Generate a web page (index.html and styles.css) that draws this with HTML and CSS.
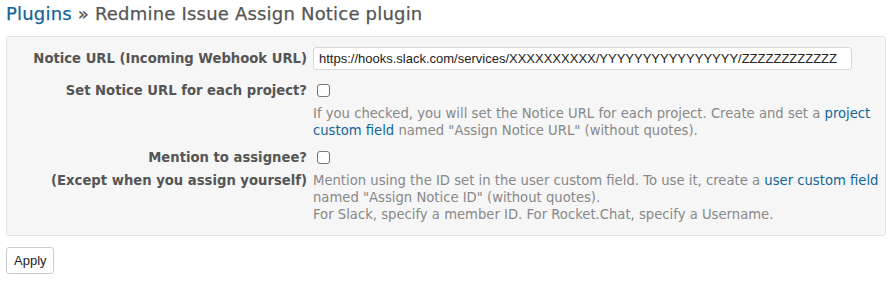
FILE: index.html
```html
<!DOCTYPE html>
<html lang="en">
<head>
  <meta charset="UTF-8" />
  <meta name="viewport" content="width=device-width, initial-scale=1.0" />
  <title>Plugins » Redmine Issue Assign Notice plugin</title>
  <link rel="stylesheet" href="styles.css">
</head>
<body>
  <h2 class="title"><a href="#">Plugins</a> » Redmine Issue Assign Notice plugin</h2>

  <form class="settings">
    <div class="box tabular">
      <div class="row first">
        <label for="notice_url">Notice URL (Incoming Webhook URL)</label>
        <div class="value">
          <input type="text" id="notice_url" class="url" value="https://hooks.slack.com/services/XXXXXXXXXX/YYYYYYYYYYYYYYYY/ZZZZZZZZZZZZ" />
        </div>
      </div>
      <div class="row check-row">
        <label for="each_project">Set Notice URL for each project?</label>
        <div class="value"><input type="checkbox" id="each_project" /></div>
      </div>
      <div class="row info-row">
        <span class="sublabel"></span>
        <em class="info">If you checked, you will set the Notice URL for each project. Create and set a <a href="#">project custom field</a> named "Assign Notice URL" (without quotes).</em>
      </div>
      <div class="row check-row">
        <label for="mention">Mention to assignee?</label>
        <div class="value"><input type="checkbox" id="mention" /></div>
      </div>
      <div class="row info-row">
        <span class="sublabel">(Except when you assign yourself)</span>
        <em class="info">Mention using the ID set in the user custom field. To use it, create a <a href="#">user custom field</a> named "Assign Notice ID" (without quotes).<br/>For Slack, specify a member ID. For Rocket.Chat, specify a Username.</em>
      </div>
    </div>
    <button type="button" class="apply">Apply</button>
  </form>
</body>
</html>
```

FILE: styles.css
```css
body { margin: 0; padding: 3px 6px; font-family: "DejaVu Sans", Verdana, sans-serif; font-size: 13.2px; color: #333; background: #fff; }
a { color: #169; text-decoration: none; }
.title { font-size: 18px; font-weight: normal; letter-spacing: 0.2px; color: #555; margin: 0 0 11px 0; padding: 0; line-height: 22px; -webkit-text-stroke: 0.25px currentColor; }
.box { background: #f6f6f6; border: 1px solid #e4e4e4; border-radius: 3px; padding: 10px 0 12px 0; }
.row { display: grid; grid-template-columns: 300px 1fr; column-gap: 6px; line-height: 17px; }
.row label, .row .sublabel { text-align: right; font-weight: bold; color: #555; }
.row.first label { line-height: 23px; }
.check-row { margin-top: 12px; }
.check-row + .info-row { margin-top: 6px; }
.info-row + .check-row { margin-top: 10px; }
.url { box-sizing: border-box; display: block; width: 539px; height: 23px; padding: 2px 5px; font-family: "Liberation Sans", Arial, sans-serif; font-size: 13px; color: #222; border: 1px solid #d7d7d7; border-radius: 3px; background: #fff; }
input[type=checkbox] { appearance: none; display: block; box-sizing: border-box; width: 13px; height: 13px; margin: 2px 0 0 4px; border: 1px solid #767676; border-radius: 3px; background: #fff; }
.info { display: block; font-style: normal; color: #888; padding-right: 5px; }
.apply { display: block; margin-top: 11px; font-family: "Liberation Sans", Arial, sans-serif; font-size: 13px; color: #222; background: #fff; border: 1px solid #ccc; border-radius: 3px; padding: 0 7px; width: 48px; height: 27px; }
```
